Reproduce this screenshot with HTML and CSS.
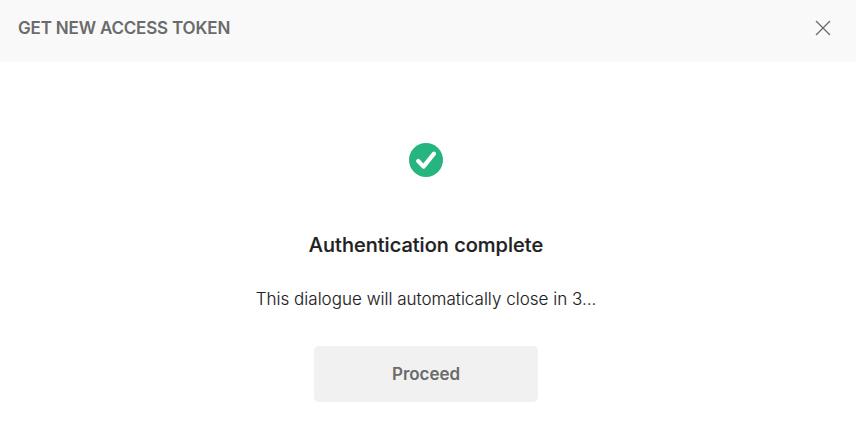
FILE: index.html
```html
<!DOCTYPE html>
<html lang="en">
<head>
<meta charset="utf-8">
<title>Get new access token</title>
<link rel="stylesheet" href="styles.css">
</head>
<body>
<div class="modal">
  <header class="modal-header">
    <h1 class="modal-title">GET NEW ACCESS TOKEN</h1>
    <button class="close" aria-label="Close">
      <svg width="16" height="16" viewBox="0 0 16 16"><path d="M1 1L15 15M15 1L1 15" fill="none" stroke="#6b6b6b" stroke-width="1.3"/></svg>
    </button>
  </header>
  <main class="modal-body">
    <svg class="status" width="34" height="34" viewBox="0 0 34 34"><circle cx="17" cy="17" r="17" fill="#26b47f"/><path d="M9.2 18L14.5 23.6L25 10.6" fill="none" stroke="#fff" stroke-width="4.2" stroke-linecap="round" stroke-linejoin="round"/></svg>
    <h2 class="heading">Authentication complete</h2>
    <p class="message">This dialogue will automatically close in 3...</p>
    <button class="proceed">Proceed</button>
  </main>
</div>
</body>
</html>
```
FILE: styles.css
```css
* { box-sizing: border-box; }
body { margin: 0; background: #fff; font-family: Inter, sans-serif; }
h1, h2, p { margin: 0; }
button { border: 0; padding: 0; font-family: inherit; }
.modal { height: 433px; overflow: hidden; }
.modal-header { height: 62px; padding: 0 25px 6px 18px; display: flex; align-items: center; justify-content: space-between; background: #f9f9f9; }
.modal-title { font-size: 17px; line-height: 24px; font-weight: 600; letter-spacing: -0.18px; color: #6b6b6b; }
.close { display: flex; background: none; }
.modal-body { display: flex; flex-direction: column; align-items: center; padding: 81px 4px 0 0; }
.heading { margin-top: 54px; font-size: 20px; line-height: 28px; font-weight: 500; letter-spacing: 0.02px; color: #212121; -webkit-text-stroke: 0.2px #212121; }
.message { margin-top: 28px; font-size: 17px; line-height: 24px; font-weight: 300; letter-spacing: 0.01px; color: #212121; -webkit-text-stroke: 0.1px #212121; }
.proceed { margin-top: 35px; width: 224px; height: 56px; border-radius: 5px; background: #f1f1f1; color: #6b6b6b; font-size: 17px; font-weight: 600; letter-spacing: -0.05px; }
```
